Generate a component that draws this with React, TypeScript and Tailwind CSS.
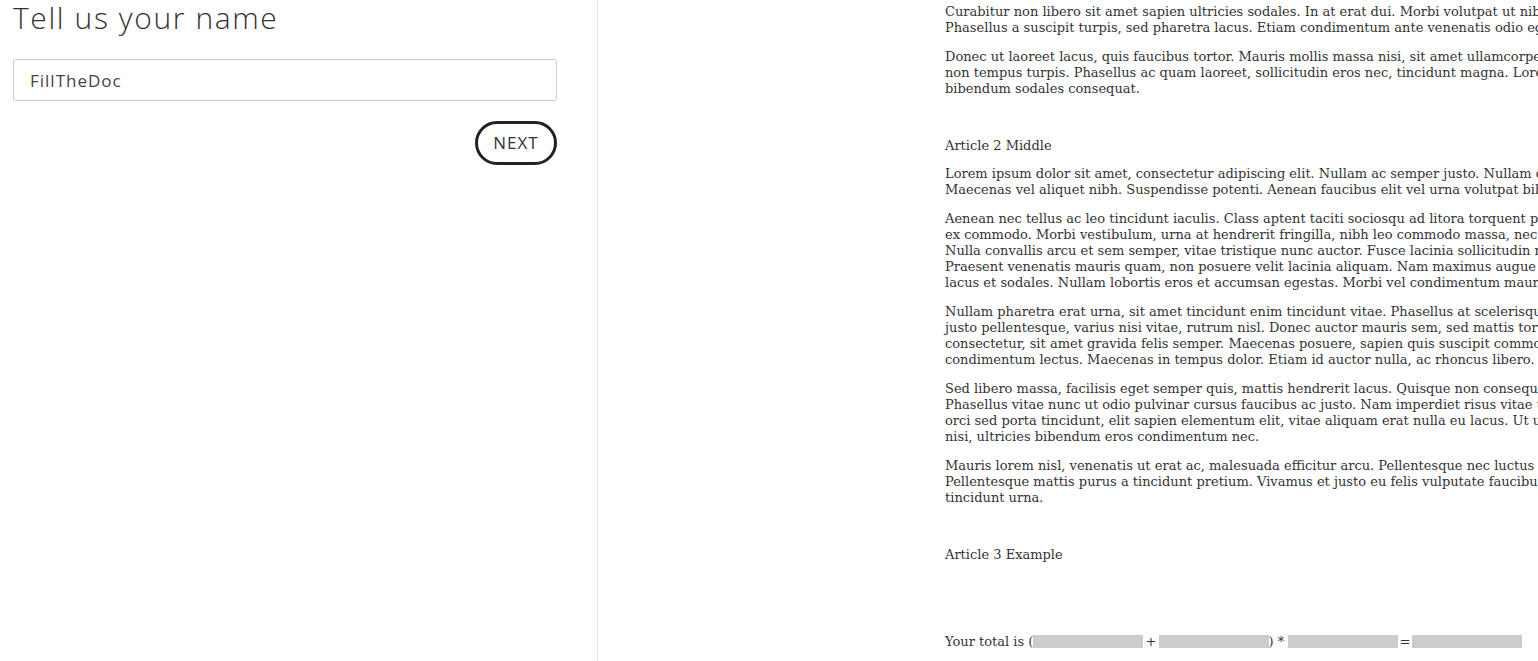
const doc: { kind: "p" | "h"; lines: string[] }[] = [
  {
    kind: "p",
    lines: [
      "Curabitur non libero sit amet sapien ultricies sodales. In at erat dui. Morbi volutpat ut nibh id dictum. Integer sed ornare",
      "Phasellus a suscipit turpis, sed pharetra lacus. Etiam condimentum ante venenatis odio egestas, at blandit nisi",
    ],
  },
  {
    kind: "p",
    lines: [
      "Donec ut laoreet lacus, quis faucibus tortor. Mauris mollis massa nisi, sit amet ullamcorper lorem efficitur sed",
      "non tempus turpis. Phasellus ac quam laoreet, sollicitudin eros nec, tincidunt magna. Lorem ipsum dolor sit amet",
      "bibendum sodales consequat.",
    ],
  },
  { kind: "h", lines: ["Article 2 Middle"] },
  {
    kind: "p",
    lines: [
      "Lorem ipsum dolor sit amet, consectetur adipiscing elit. Nullam ac semper justo. Nullam quis lorem vel diam",
      "Maecenas vel aliquet nibh. Suspendisse potenti. Aenean faucibus elit vel urna volutpat bibendum. Sed at",
    ],
  },
  {
    kind: "p",
    lines: [
      "Aenean nec tellus ac leo tincidunt iaculis. Class aptent taciti sociosqu ad litora torquent per conubia nostra",
      "ex commodo. Morbi vestibulum, urna at hendrerit fringilla, nibh leo commodo massa, nec pretium nisl",
      "Nulla convallis arcu et sem semper, vitae tristique nunc auctor. Fusce lacinia sollicitudin mi, a",
      "Praesent venenatis mauris quam, non posuere velit lacinia aliquam. Nam maximus augue et nunc",
      "lacus et sodales. Nullam lobortis eros et accumsan egestas. Morbi vel condimentum mauris, in",
    ],
  },
  {
    kind: "p",
    lines: [
      "Nullam pharetra erat urna, sit amet tincidunt enim tincidunt vitae. Phasellus at scelerisque nunc",
      "justo pellentesque, varius nisi vitae, rutrum nisl. Donec auctor mauris sem, sed mattis tortor",
      "consectetur, sit amet gravida felis semper. Maecenas posuere, sapien quis suscipit commodo, ante",
      "condimentum lectus. Maecenas in tempus dolor. Etiam id auctor nulla, ac rhoncus libero. Nam",
    ],
  },
  {
    kind: "p",
    lines: [
      "Sed libero massa, facilisis eget semper quis, mattis hendrerit lacus. Quisque non consequat nisi",
      "Phasellus vitae nunc ut odio pulvinar cursus faucibus ac justo. Nam imperdiet risus vitae tellus",
      "orci sed porta tincidunt, elit sapien elementum elit, vitae aliquam erat nulla eu lacus. Ut ut",
      "nisi, ultricies bibendum eros condimentum nec.",
    ],
  },
  {
    kind: "p",
    lines: [
      "Mauris lorem nisl, venenatis ut erat ac, malesuada efficitur arcu. Pellentesque nec luctus odio",
      "Pellentesque mattis purus a tincidunt pretium. Vivamus et justo eu felis vulputate faucibus non",
      "tincidunt urna.",
    ],
  },
  { kind: "h", lines: ["Article 3 Example"] },
];

function Blank() {
  return <span className="inline-block h-[13px] w-[110px] bg-[#cccccc] align-[-2px]" />;
}

export default function App() {
  return (
    <div className="flex h-[661px] w-[1538px] overflow-hidden bg-white">
      <aside className="w-[598px] shrink-0 border-r border-[#e2e2e2] px-[13px] font-['Open_Sans',sans-serif] text-[#333]">
        <h1 className="mt-[-2px] text-[30px] font-light leading-[40px] tracking-[1.6px]">Tell us your name</h1>
        <input
          defaultValue="FillTheDoc"
          className="mt-[21px] block h-[42px] w-[544px] rounded-[3px] border border-[#cccccc] px-[16px] text-[17px] tracking-[1px] text-[#444] outline-none"
        />
        <div className="mt-[20px] flex w-[544px] justify-end">
          <button className="h-[44px] w-[82px] rounded-full border-[3px] border-[#222] text-[17px] tracking-[1px] text-[#333]">
            NEXT
          </button>
        </div>
      </aside>

      <main className="flex-1 overflow-hidden pl-[347px] font-['DejaVu_Serif',serif] text-[13px] leading-[16px] text-[#333]">
        <div className="mt-[4px] whitespace-nowrap">
          {doc.map((block, i) => (
            <p key={i} className={block.kind === "h" ? "mt-[41px] mb-[12px]" : "mb-[13px]"}>
              {block.lines.map((line, j) => (
                <span key={j} className="block">
                  {line}
                </span>
              ))}
            </p>
          ))}
          <p className="mt-[71px]">
            Your total is (<Blank />
            <span className="[word-spacing:-2px]">{" + "}</span>
            <Blank />
            <span>{") * "}</span>
            <Blank />
            <span className="[word-spacing:-3px]">{" = "}</span>
            <Blank />
          </p>
        </div>
      </main>
    </div>
  );
}
